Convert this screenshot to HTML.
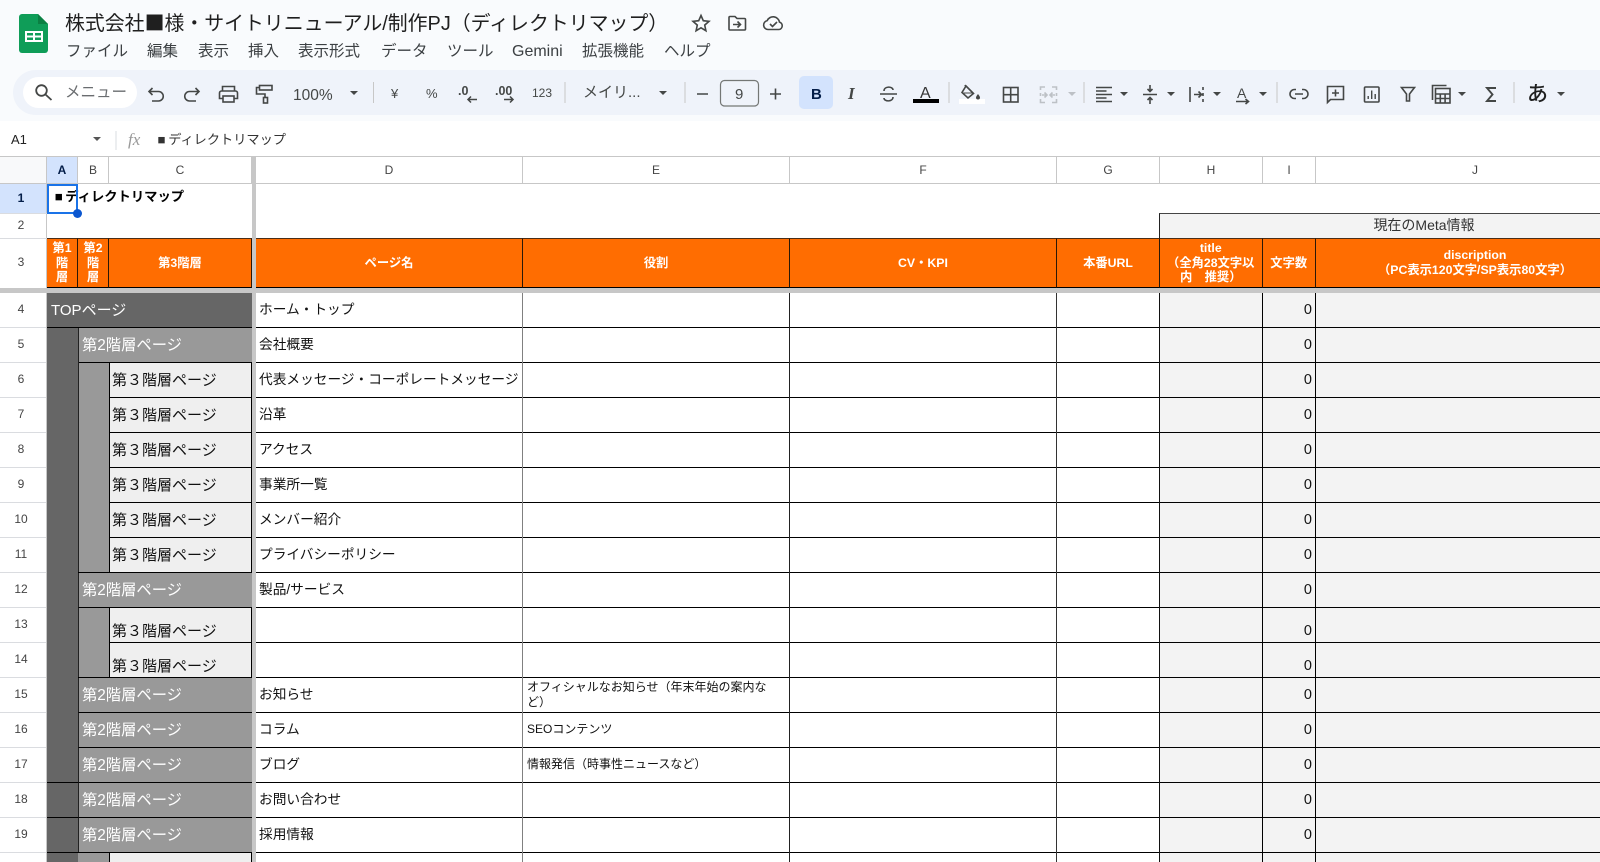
<!DOCTYPE html>
<html lang="ja"><head><meta charset="utf-8"><title>株式会社■様・サイトリニューアル/制作PJ（ディレクトリマップ）</title>
<style>
html,body{margin:0;padding:0;background:#fff}
#p{position:relative;width:1600px;height:862px;overflow:hidden;background:#fff;font-family:"Liberation Sans","Noto Sans CJK JP",sans-serif;color:#222;filter:blur(.3px)}
#p div{position:absolute;box-sizing:border-box}
.sq{font-family:"Noto Sans CJK JP",sans-serif}
.ss{display:inline-block;width:1em;text-align:center;font-family:"Liberation Sans",sans-serif}
.m{top:42px;font-size:15.500px;line-height:20px;color:#3c4043;white-space:nowrap}
.ch{top:157px;height:27px;line-height:27px;text-align:center;font-size:12px;color:#444;border-right:1px solid #c7c7c7}
.rh{left:0;width:42px;text-align:center;font-size:12px;color:#444;line-height:16px}
.o{top:238px;height:50px;background:#ff6d01;border-right:1px solid #2a1808;border-top:1px solid #4a2e18;border-bottom:1px solid #000;color:#fff;font-weight:700;font-size:12.300px;line-height:14.600px;text-align:center;display:flex;align-items:center;justify-content:center}
.L3{left:109px;width:143px;height:35px;background:#efefef;border:1px solid #000;border-top:0;font-size:15px;line-height:35px;padding-left:2px;color:#111;white-space:nowrap}
.L2{left:78px;width:174px;height:35px;background:#999;border-bottom:1px solid #000;border-left:1px solid #222;font-size:15.300px;line-height:35px;padding-left:3px;color:#fff;white-space:nowrap}
.d{left:259px;font-size:13.700px;line-height:20px;color:#111;white-space:nowrap}
.e{left:527px;font-size:12px;line-height:14.600px;color:#111;white-space:nowrap}
.z{left:1263px;width:49px;text-align:right;font-size:14.500px;line-height:20px;color:#111}
.v{top:293px;height:569px;width:1px}
</style></head><body><div id="p">

<div style="left:0;top:0;width:1600px;height:121px;background:#f9fbfd"></div>
<div style="left:13px;top:70px;width:1587px;height:45px;background:#eff3fa;border-radius:23px 0 0 23px"></div>
<div style="left:23px;top:77px;width:114px;height:31px;background:#fff;border-radius:16px"></div>
<div style="left:799px;top:76px;width:34px;height:33px;background:#d3e3fd;border-radius:5px"></div>
<div style="left:65px;top:8px;font-size:19.900px;line-height:28px;color:#1f1f1f;white-space:nowrap">株式会社<span class="sq">■</span>様・サイトリニューアル/制作PJ（ディレクトリマップ）</div>
<div class="m" style="left:66px">ファイル</div><div class="m" style="left:147px">編集</div><div class="m" style="left:198px">表示</div><div class="m" style="left:248px">挿入</div><div class="m" style="left:298px">表示形式</div><div class="m" style="left:381px">データ</div><div class="m" style="left:447px">ツール</div><div class="m" style="left:512px;font-size:16px">Gemini</div><div class="m" style="left:582px">拡張機能</div><div class="m" style="left:664px">ヘルプ</div>
<div style="left:65px;top:83px;font-size:15.500px;line-height:20px;color:#6a6d70;white-space:nowrap">メニュー</div>

<svg style="position:absolute;left:0;top:0" width="1600" height="156" viewBox="0 0 1600 156" fill="none" stroke="#444746" stroke-width="1.6" font-family="Liberation Sans,Noto Sans CJK JP,sans-serif">
<path stroke="none" fill="#0f9d58" d="M22 14H38L48 24V50a3 3 0 0 1-3 3H22a3 3 0 0 1-3-3V17a3 3 0 0 1 3-3z"/>
<path stroke="none" fill="#0b8043" d="M38 14L48 24H38z"/>
<path stroke="none" fill="#fff" d="M25 31h18v11H25z"/>
<path stroke="none" fill="#0f9d58" d="M27 33h6v2.500h-6zM35 33h6v2.500h-6zM27 37.500h6V40h-6zM35 37.500h6V40h-6z"/>
<path d="M701 15.500l2.300 5.200 5.700.6-4.300 3.800 1.200 5.600-4.900-2.900-4.900 2.900 1.200-5.600-4.300-3.800 5.700-.6z"/>
<path d="M729 19v-1.500a1 1 0 0 1 1-1h5l2 2h7.500a1 1 0 0 1 1 1V29a1 1 0 0 1-1 1H730a1 1 0 0 1-1-1z"/><path d="M733 24.500h7M737.500 21.500l3 3-3 3"/>
<path d="M768 29.500a4.500 4.500 0 0 1-.8-8.900 6.500 6.500 0 0 1 12.300 1.500 3.800 3.800 0 0 1-.5 7.400z"/><path d="M770 24l2.500 2.500 4.500-4.500"/>
<circle cx="41.500" cy="90.500" r="5.300" stroke-width="1.800"/><path d="M45.500 94.500l6 5.500" stroke-width="1.800"/>
<path d="M152.500 88l-3.500 3.500 3.500 3.500M149 91.500h9.500a4.700 4.700 0 0 1 0 9.500H152"/>
<path d="M195.500 88l3.500 3.500-3.500 3.500M199 91.500h-9.500a4.700 4.700 0 0 0 0 9.500H196"/>
<path d="M222.500 91V86.500h12V91M223 98.500h-3.500V93a2 2 0 0 1 2-2h14a2 2 0 0 1 2 2v5.500H234"/><rect x="223" y="96" width="11" height="6"/>
<rect x="259.500" y="85.500" width="12.500" height="4.500"/><path d="M259.500 87.500h-3v6.500h8.500v3.500"/><rect x="263.500" y="97.500" width="4" height="5.500"/>
<g stroke="none" fill="#444746">
<text x="293" y="100" font-size="15.500">100%</text>
<path d="M350 91h8l-4 4zM659 91h8l-4 4zM1120 92h8l-4 4zM1167 92h8l-4 4zM1213 92h8l-4 4zM1259 92h8l-4 4zM1458 92h8l-4 4zM1557 92h8l-4 4z"/>
<path fill="#bdc1c6" d="M1068 92h8l-4 4z"/>
<text x="391" y="98" font-size="13">¥</text><text x="426" y="98" font-size="13">%</text>
<text x="458" y="95" font-size="12.500" font-weight="700">.0</text><text x="495" y="95" font-size="12.500" font-weight="700">.00</text>
<text x="532" y="97" font-size="12">123</text>
<text x="583" y="97" font-size="15">メイリ...</text>
<text x="735" y="99" font-size="15">9</text>
<text x="811" y="99" font-size="15" font-weight="700" fill="#041e49">B</text>
<text x="848" y="99" font-size="17" font-style="italic" font-family="Liberation Serif,serif" font-weight="700">I</text>
<text x="920" y="98" font-size="16" fill="#333">A</text>
<text x="1527" y="101" font-size="21" font-weight="500" fill="#1f1f1f">あ</text>
<text x="1237" y="98" font-size="14">A</text>
<path fill="#000" d="M913 99h26v4h-26z"/><path fill="#fff" d="M959 99h26v5h-26z"/>
<path d="M1367.500 96h1.400v3h-1.400zM1371 90.500h1.400v8.500H1371zM1374.500 94h1.400v5h-1.400z"/>
<path d="M978 94c1.300 1.700 2 2.700 2 3.500a2 2 0 0 1-4 0c0-.8.700-1.800 2-3.500z"/>
</g>
<path d="M373.500 82v21M565 82v21M685 82v21M949 82v21M1084 82v21M1277 82v21M1514 82v21" stroke="#c7c7c7" stroke-width="1"/>
<path d="M468 99.500h9M471 96.500l-3 3 3 3" stroke-width="1.500"/><path d="M504 99.500h9M510 96.500l3 3-3 3" stroke-width="1.500"/>
<path d="M697 94h11M770 94h11M775.500 88.500v11"/>
<rect x="720.500" y="80.500" width="38" height="25.500" rx="4" stroke="#747775" stroke-width="1.200"/>
<path d="M880 94h17"/><path d="M884 91c0-5 9-5 9-1M893 97c0 5-9 5-9 1"/>
<path d="M966 87l-1-2M966 86l7.500 7.500-5.500 4.500-6-5.500z"/>
<path d="M963.500 93h9" stroke-width="1"/>
<rect x="1003.500" y="87.500" width="14.500" height="14.500"/><path d="M1010.700 87.500v14.500M1003.500 94.700h14.500"/>
<g stroke="#bdc1c6"><path d="M1045 87h-4.500v3M1040.500 99v3.500h4.500M1052 87h4.500v3M1056.500 99v3.500H1052M1040.500 93v3M1056.500 93v3"/><path d="M1042 95h4.500M1044.500 92.500l2.500 2.500-2.500 2.500M1055 95h-4.500M1052.500 92.500l-2.500 2.500 2.500 2.500"/></g>
<path d="M1096 87.500h16M1096 91h10.500M1096 94.500h16M1096 98h10.500M1096 101.500h16"/>
<path d="M1143 94.500h14M1150 85v6M1147.500 89l2.500 2.500 2.500-2.500M1150 104v-6M1147.500 100l2.500-2.500 2.500 2.500"/>
<path d="M1190 87v15M1203 87v3M1203 93v3M1203 99v3M1194 94.500h7M1198.500 91.500l3 3-3 3"/>
<path d="M1236 101.500h12M1245.500 99l3 2.500-3 2.500"/>
<path d="M1296 89.500h-1.500a4.500 4.500 0 0 0 0 9h1.500M1302 89.500h1.500a4.500 4.500 0 0 1 0 9H1302M1295 94h8"/>
<path d="M1327.500 86.500h16v13h-13l-3 3zM1335.500 89.500v7M1332 93h7"/>
<rect x="1364.500" y="87" width="14.500" height="15" rx="1"/>
<path d="M1401.500 87.500h13l-5 6.500v7h-3v-7z"/>
<path d="M1432.500 100V85.500h14"/><rect x="1435.500" y="88.500" width="14.500" height="14.500"/><path d="M1435.500 94h14.500M1435.500 98.500h14.500M1440.300 94v9M1445.100 94v9"/>
<path d="M1496 88h-9l5.500 6.500-5.500 6.500h9" stroke-width="1.900"/>
<text x="128" y="145" font-size="17" font-style="italic" stroke="none" fill="#999" font-family="Liberation Serif,serif">fx</text>
<path d="M116 131v19" stroke="#dadce0" stroke-width="1"/>
<path d="M93 137h8l-4 4z" stroke="none" fill="#555"/>
</svg>
<div style="left:11px;top:131px;font-size:13px;line-height:18px;color:#222">A1</div>
<div style="left:155px;top:131px;font-size:13.200px;line-height:18px;color:#333;white-space:nowrap"><span class="ss">■</span>ディレクトリマップ</div>

<!-- column header -->
<div style="left:0;top:156px;width:1600px;height:1px;background:#c7c7c7"></div>
<div style="left:0;top:157px;width:47px;height:27px;background:#f8f9fa;border-right:1px solid #c7c7c7"></div>
<div class="ch" style="left:47px;width:31px;background:#d3e3fd;color:#041e49;font-weight:700">A</div>
<div class="ch" style="left:78px;width:31px">B</div>
<div class="ch" style="left:109px;width:143px">C</div>
<div class="ch" style="left:256px;width:267px">D</div>
<div class="ch" style="left:523px;width:267px">E</div>
<div class="ch" style="left:790px;width:267px">F</div>
<div class="ch" style="left:1057px;width:103px">G</div>
<div class="ch" style="left:1160px;width:103px">H</div>
<div class="ch" style="left:1263px;width:53px">I</div>
<div class="ch" style="left:1316px;width:318px;border:0">J</div>
<div style="left:0;top:183px;width:1600px;height:1px;background:#c7c7c7"></div>

<!-- row headers -->
<div style="left:0;top:184px;width:47px;height:29px;background:#d3e3fd"></div>
<div style="left:46px;top:184px;width:1px;height:678px;background:#c7c7c7"></div>
<div style="left:0;top:213px;width:47px;height:1px;background:#dadce0"></div>
<div style="left:0;top:238px;width:47px;height:1px;background:#dadce0"></div>
<div style="left:0;top:293px;width:46px;height:569px;background:repeating-linear-gradient(to bottom,#fff 0,#fff 34px,#dadce0 34px,#dadce0 35px)"></div>
<div class="rh" style="top:190px;color:#041e49;font-weight:700">1</div><div class="rh" style="top:217px">2</div><div class="rh" style="top:254px">3</div>
<div class="rh" style="top:301px">4</div><div class="rh" style="top:336px">5</div><div class="rh" style="top:371px">6</div><div class="rh" style="top:406px">7</div><div class="rh" style="top:441px">8</div><div class="rh" style="top:476px">9</div><div class="rh" style="top:511px">10</div><div class="rh" style="top:546px">11</div><div class="rh" style="top:581px">12</div><div class="rh" style="top:616px">13</div><div class="rh" style="top:651px">14</div><div class="rh" style="top:686px">15</div><div class="rh" style="top:721px">16</div><div class="rh" style="top:756px">17</div><div class="rh" style="top:791px">18</div><div class="rh" style="top:826px">19</div>

<!-- row 1-3 -->
<div style="left:52px;top:187px;font-size:13.300px;font-weight:700;line-height:20px;color:#000;white-space:nowrap"><span class="ss">■</span>ディレクトリマップ</div>
<div style="left:1159px;top:213px;width:441px;height:25px;background:#f3f3f3;border-top:1px solid #444;border-left:1px solid #222"></div>
<div style="left:1160px;top:213px;width:528px;height:25px;line-height:25px;text-align:center;font-size:14px;color:#333">現在のMeta情報</div>
<div class="o" style="left:47px;width:31px">第1<br>階<br>層</div>
<div class="o" style="left:78px;width:31px">第2<br>階<br>層</div>
<div class="o" style="left:109px;width:143px">第3階層</div>
<div class="o" style="left:256px;width:267px">ページ名</div>
<div class="o" style="left:523px;width:267px">役割</div>
<div class="o" style="left:790px;width:267px">CV・KPI</div>
<div class="o" style="left:1057px;width:103px">本番URL</div>
<div class="o" style="left:1160px;width:102.500px">title<br>（全角28文字以<br>内　推奨）</div>
<div class="o" style="left:1262.500px;width:53.500px">文字数</div>
<div class="o" style="left:1316px;width:318px;border-right:0">discription<br>（PC表示120文字/SP表示80文字）</div>

<!-- data grid -->
<div style="left:1159px;top:293px;width:441px;height:569px;background:#f3f3f3"></div>
<div style="left:256px;top:293px;width:1344px;height:569px;background:repeating-linear-gradient(to bottom,transparent 0,transparent 34px,#000 34px,#000 35px)"></div>
<div class="v" style="left:522px;background:#808080"></div><div class="v" style="left:789px;background:#222"></div><div class="v" style="left:1056px;background:#333"></div><div class="v" style="left:1159px;background:#111"></div><div class="v" style="left:1262px;background:#000"></div><div class="v" style="left:1315px;background:#000"></div>

<!-- hierarchy -->
<div style="left:47px;top:293px;width:31px;height:569px;background:#666"></div>
<div style="left:78px;top:328px;width:31px;height:534px;background:#999"></div>
<div style="left:47px;top:293px;width:205px;height:35px;background:#666;border-bottom:1px solid #000;font-size:15px;line-height:35px;padding-left:4px;color:#fff">TOPページ</div>
<div class="L2" style="top:328px">第2階層ページ</div>
<div class="L3" style="top:363px">第３階層ページ</div><div class="L3" style="top:398px">第３階層ページ</div><div class="L3" style="top:433px">第３階層ページ</div><div class="L3" style="top:468px">第３階層ページ</div><div class="L3" style="top:503px">第３階層ページ</div><div class="L3" style="top:538px">第３階層ページ</div>
<div style="left:78px;top:328px;width:1px;height:350px;background:#222"></div>
<div style="left:78px;top:572px;width:31px;height:1px;background:#000"></div>
<div class="L2" style="top:573px">第2階層ページ</div>
<div class="L3" style="top:608px;line-height:47px">第３階層ページ</div><div class="L3" style="top:643px;line-height:47px">第３階層ページ</div>
<div style="left:78px;top:677px;width:31px;height:1px;background:#000"></div>
<div class="L2" style="top:678px">第2階層ページ</div><div class="L2" style="top:713px">第2階層ページ</div><div class="L2" style="top:748px">第2階層ページ</div>
<div style="left:47px;top:782px;width:31px;height:1px;background:#000"></div>
<div class="L2" style="top:783px">第2階層ページ</div>
<div style="left:47px;top:817px;width:31px;height:1px;background:#000"></div>
<div class="L2" style="top:818px">第2階層ページ</div>
<div style="left:47px;top:852px;width:31px;height:1px;background:#000"></div>
<div style="left:78px;top:852px;width:31px;height:1px;background:#000"></div>
<div class="L3" style="top:853px"></div>

<!-- freeze bars -->
<div style="left:252px;top:157px;width:4px;height:705px;background:#c7c7c7"></div>
<div style="left:0;top:288px;width:1600px;height:5px;background:#c7c7c7"></div>

<!-- page names -->
<div class="d" style="top:300px">ホーム・トップ</div><div class="d" style="top:335px">会社概要</div><div class="d" style="top:370px">代表メッセージ・コーポレートメッセージ</div><div class="d" style="top:405px">沿革</div><div class="d" style="top:440px">アクセス</div><div class="d" style="top:475px">事業所一覧</div><div class="d" style="top:510px">メンバー紹介</div><div class="d" style="top:545px">プライバシーポリシー</div><div class="d" style="top:580px">製品/サービス</div><div class="d" style="top:685px">お知らせ</div><div class="d" style="top:720px">コラム</div><div class="d" style="top:755px">ブログ</div><div class="d" style="top:790px">お問い合わせ</div><div class="d" style="top:825px">採用情報</div>
<div class="e" style="top:680px">オフィシャルなお知らせ（年末年始の案内な<br>ど）</div><div class="e" style="top:722px">SEOコンテンツ</div><div class="e" style="top:757px">情報発信（時事性ニュースなど）</div>

<!-- counts -->
<div class="z" style="top:300px">0</div><div class="z" style="top:335px">0</div><div class="z" style="top:370px">0</div><div class="z" style="top:405px">0</div><div class="z" style="top:440px">0</div><div class="z" style="top:475px">0</div><div class="z" style="top:510px">0</div><div class="z" style="top:545px">0</div><div class="z" style="top:580px">0</div><div class="z" style="top:621px">0</div><div class="z" style="top:656px">0</div><div class="z" style="top:685px">0</div><div class="z" style="top:720px">0</div><div class="z" style="top:755px">0</div><div class="z" style="top:790px">0</div><div class="z" style="top:825px">0</div>

<!-- selection -->
<div style="left:47px;top:184px;width:31px;height:30px;border:2px solid #1a73e8"></div>
<div style="left:73px;top:209px;width:9px;height:9px;background:#0b57d0;border-radius:50%"></div>
</div></body></html>
